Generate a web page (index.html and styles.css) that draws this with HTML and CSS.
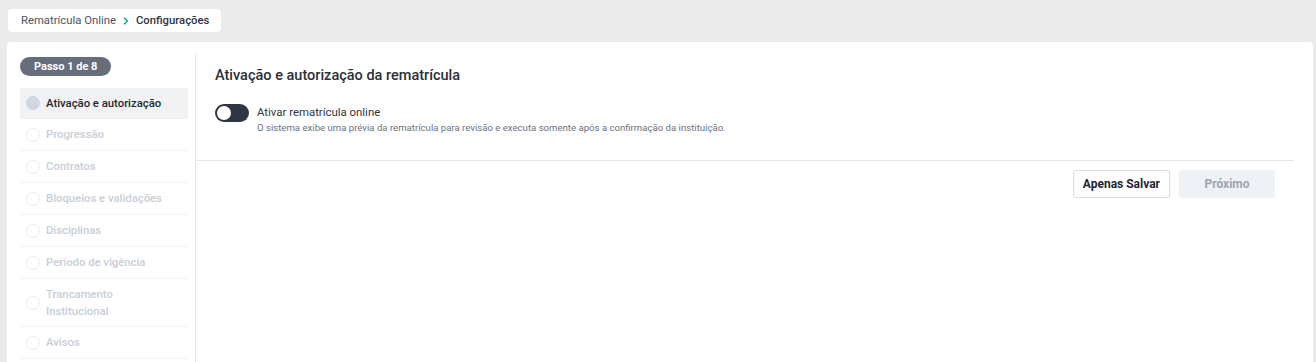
FILE: index.html
```html
<!DOCTYPE html>
<html lang="pt-BR">
  <head>
    <meta charset="UTF-8" />
    <meta name="viewport" content="width=device-width, initial-scale=1.0" />
    <title>Rematrícula Online - Configurações</title>
    <link rel="stylesheet" href="styles.css">
  </head>
  <body>
    <div id="page">
      <div id="breadcrumb">
        <span class="crumb">Rematrícula Online</span>
        <svg class="crumb-sep" width="8" height="8" viewBox="0 0 8 8">
          <path d="M2.5 1.2 L5.5 4 L2.5 6.8" fill="none" stroke="#1fa889" stroke-width="1.6" stroke-linecap="round" stroke-linejoin="round" />
        </svg>
        <span class="crumb current">Configurações</span>
      </div>

      <div id="card">
        <div id="steps">
          <div class="step-pill">Passo 1 de 8</div>
          <div class="step-list">
            <div class="step active"><span class="dot"></span><span class="step-name">Ativação e autorização</span></div>
            <div class="step"><span class="dot"></span><span class="step-name">Progressão</span></div>
            <div class="step"><span class="dot"></span><span class="step-name">Contratos</span></div>
            <div class="step"><span class="dot"></span><span class="step-name">Bloqueios e validações</span></div>
            <div class="step"><span class="dot"></span><span class="step-name">Disciplinas</span></div>
            <div class="step"><span class="dot"></span><span class="step-name">Período de vigência</span></div>
            <div class="step tall"><span class="dot"></span><span class="step-name">Trancamento<br>Institucional</span></div>
            <div class="step"><span class="dot"></span><span class="step-name">Avisos</span></div>
          </div>
        </div>

        <div id="content">
          <div class="section">
            <h3 class="section-title">Ativação e autorização da rematrícula</h3>
            <div class="toggle-row">
              <span class="toggle"><span class="knob"></span></span>
              <div class="toggle-text">
                <div class="toggle-label">Ativar rematrícula online</div>
                <div class="toggle-help">O sistema exibe uma prévia da rematrícula para revisão e executa somente após a confirmação da instituição.</div>
              </div>
            </div>
          </div>
          <div class="actions">
            <button class="btn btn-outline">Apenas Salvar</button>
            <button class="btn btn-disabled">Próximo</button>
          </div>
        </div>
      </div>
    </div>
  </body>
</html>
```

FILE: styles.css
```css
html, body {
  height: 100%;
}

body {
  margin: 0;
  font-family: Roboto, "Liberation Sans", Arial, sans-serif;
  background-color: #ebebeb;
  overflow: hidden;
}

#page {
  display: flex;
  flex-direction: column;
  height: 100%;
  padding: 9px 3px 0 7px;
  box-sizing: border-box;
}

#breadcrumb {
  align-self: flex-start;
  display: flex;
  align-items: center;
  height: 23px;
  margin-left: 1px;
  padding: 0 12px 0 13px;
  background-color: white;
  border-radius: 4px;
  font-size: 11.3px;
}

.crumb {
  color: #4b5361;
}

.crumb.current {
  color: #2f3542;
  font-weight: 500;
}

.crumb-sep {
  margin: 0 6px 0 6px;
}

#card {
  flex-grow: 1;
  display: flex;
  margin-top: 10px;
  background-color: white;
  border-radius: 4px 4px 0 0;
}

#steps {
  width: 168px;
  padding: 13px 0 0 13px;
}

.step-pill {
  display: inline-block;
  height: 19px;
  line-height: 19px;
  padding: 0 14px;
  border-radius: 10px;
  background-color: #676d7a;
  color: white;
  font-size: 11px;
  font-weight: 700;
}

.step-list {
  margin-top: 12px;
}

.step {
  display: flex;
  align-items: center;
  height: 31px;
  padding-left: 6px;
  border-bottom: 1px solid #f0f1f3;
  font-size: 11.3px;
  font-weight: 500;
  color: #c7ced8;
}

.step.tall {
  height: 47px;
  line-height: 17px;
}

.dot {
  width: 12px;
  height: 12px;
  margin-right: 6px;
  border-radius: 50%;
  border: 1px solid #eceef1;
  flex-shrink: 0;
}

.step.active {
  height: 30px;
  background-color: #f1f2f4;
  color: #23272f;
}

.step.active .dot {
  background-color: #cfd7e2;
  border-color: #cfd7e2;
}

#content {
  flex-grow: 1;
  margin: 12px 19px 0 7px;
  border-left: 1px solid #e6e8eb;
}

.section {
  padding: 12px 19px 26px 19px;
  border-bottom: 1px solid #e4e8ee;
}

.section-title {
  margin: 0;
  font-size: 14.5px;
  line-height: 20px;
  font-weight: 500;
  color: #2b2f36;
}

.toggle-row {
  display: flex;
  margin-top: 18px;
}

.toggle {
  display: flex;
  align-items: center;
  width: 34px;
  height: 18px;
  padding: 0 2px;
  box-sizing: border-box;
  border-radius: 9px;
  background-color: #2f3542;
}

.knob {
  width: 14px;
  height: 14px;
  border-radius: 50%;
  background-color: white;
}

.toggle-text {
  margin-left: 8px;
}

.toggle-label {
  font-size: 11.4px;
  line-height: 16px;
  color: #2f3542;
}

.toggle-help {
  margin-top: 2px;
  font-size: 9.6px;
  line-height: 12px;
  color: #6b7380;
}

.actions {
  display: flex;
  justify-content: flex-end;
  gap: 9px;
  padding: 9px 19px 0 0;
}

.btn {
  height: 28px;
  padding: 0 9px;
  border-radius: 3px;
  font-family: inherit;
  font-size: 12px;
  font-weight: 700;
  cursor: pointer;
}

.btn-outline {
  background-color: white;
  border: 1px solid #d9dde3;
  color: #23272f;
}

.btn-disabled {
  width: 96px;
  background-color: #eef1f5;
  border: none;
  color: #9ca4b0;
}
```
